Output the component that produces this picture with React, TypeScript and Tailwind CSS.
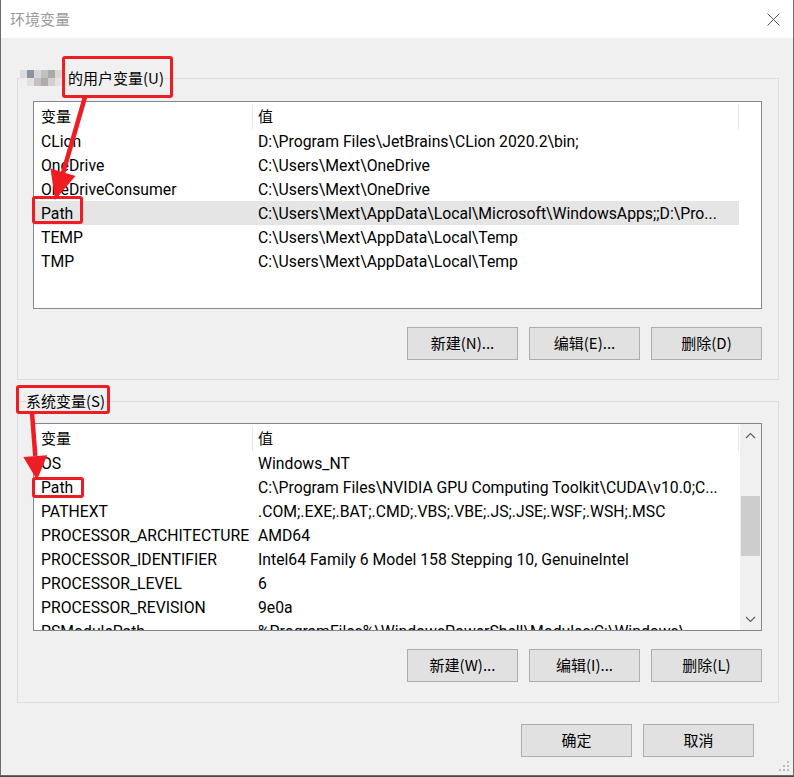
import React from "react";

const userRows: [string, string][] = [
  ["CLion", "D:\\Program Files\\JetBrains\\CLion 2020.2\\bin;"],
  ["OneDrive", "C:\\Users\\Mext\\OneDrive"],
  ["OneDriveConsumer", "C:\\Users\\Mext\\OneDrive"],
  ["Path", "C:\\Users\\Mext\\AppData\\Local\\Microsoft\\WindowsApps;;D:\\Pro..."],
  ["TEMP", "C:\\Users\\Mext\\AppData\\Local\\Temp"],
  ["TMP", "C:\\Users\\Mext\\AppData\\Local\\Temp"],
];

const sysRows: [string, string][] = [
  ["OS", "Windows_NT"],
  ["Path", "C:\\Program Files\\NVIDIA GPU Computing Toolkit\\CUDA\\v10.0;C..."],
  ["PATHEXT", ".COM;.EXE;.BAT;.CMD;.VBS;.VBE;.JS;.JSE;.WSF;.WSH;.MSC"],
  ["PROCESSOR_ARCHITECTURE", "AMD64"],
  ["PROCESSOR_IDENTIFIER", "Intel64 Family 6 Model 158 Stepping 10, GenuineIntel"],
  ["PROCESSOR_LEVEL", "6"],
  ["PROCESSOR_REVISION", "9e0a"],
  ["PSModulePath", "%ProgramFiles%\\WindowsPowerShell\\Modules;C:\\Windows\\..."],
];

const mosaic = [
  ["#dcdcdc", "#8a93a3", "#d6d6d6", "#c0c0c0", "#a9aaa3", "#d9d6d3"],
  ["#eeeeee", "#e0e0e0", "#c4bfc0", "#b3a9ab", "#d2d0cd", "#e5e3e1"],
];

function HeaderRow() {
  return (
    <div className="flex h-[27px] shrink-0">
      <div className="w-[218px] pl-[7px] pt-[4px] flex items-center">变量</div>
      <div className="w-px mt-[2px] bg-[#e5e5e5]" />
      <div className="w-[485px] pl-[5px] pt-[4px] flex items-center">值</div>
      <div className="w-px mt-[2px] bg-[#e5e5e5]" />
    </div>
  );
}

function Row({ name, value, selected }: { name: string; value: string; selected?: boolean }) {
  return (
    <div
      className={
        "flex h-[24px] w-[705px] shrink-0 items-center pt-[2px] text-[15.75px] " +
        (selected ? "bg-[#e5e5e5]" : "")
      }
    >
      <div className="w-[219px] pl-[7px] whitespace-nowrap overflow-hidden">{name}</div>
      <div className="w-[486px] pl-[5px] whitespace-nowrap overflow-hidden text-ellipsis">{value}</div>
    </div>
  );
}

function Btn({ label }: { label: string }) {
  return (
    <button className="w-[111px] h-[33px] bg-[#e1e1e1] border border-[#adadad] flex items-center justify-center text-[15px] text-black">
      {label}
    </button>
  );
}

function Chevron({ up }: { up?: boolean }) {
  return (
    <svg width="11" height="7" viewBox="0 0 11 7">
      <path
        d={up ? "M1 6 L5.5 1.5 L10 6" : "M1 1 L5.5 5.5 L10 1"}
        fill="none"
        stroke="#606060"
        strokeWidth="1.2"
      />
    </svg>
  );
}

export default function App() {
  const red = "#ee1d23";
  return (
    <div className="w-[794px] h-[777px] bg-[#4a4a4a] font-['Roboto','Noto_Sans_CJK_SC',sans-serif] text-[15px] text-black">
      <div className="relative w-[794px] h-[776px] bg-[#f0f0f0] border-x border-b border-[#6b6b6b] overflow-hidden">
        {/* Title bar */}
        <div className="h-[38px] bg-white flex items-center justify-between pl-[9px] pr-[13px]">
          <span className="text-[15px] text-[#9a9a9a] font-['Noto_Sans_CJK_SC',sans-serif]">环境变量</span>
          <svg width="13" height="13" viewBox="0 0 13 13">
            <path d="M0.5 0.5 L12.5 12.5 M12.5 0.5 L0.5 12.5" stroke="#555" strokeWidth="1" />
          </svg>
        </div>

        <div className="pl-[16px] pr-[14px]">
          {/* User variables */}
          <fieldset className="mt-[30px] border border-[#dcdcdc] w-[762px]">
            <legend className="ml-[2px] h-[20px] flex items-center leading-[20px]">
              <span className="flex flex-col">
                {mosaic.map((r, i) => (
                  <span key={i} className="flex">
                    {r.map((c, j) => (
                      <span key={j} className="w-[7px] h-[8px] block" style={{ background: c }} />
                    ))}
                  </span>
                ))}
              </span>
              <span className="ml-[6px] font-['Noto_Sans_CJK_SC',sans-serif]">的用户变量(U)</span>
            </legend>
            <div className="pl-[15px] pr-[16px] pt-[13px] pb-[19px]">
              <div className="h-[208px] bg-white border border-[#828790] flex flex-col overflow-hidden">
                <HeaderRow />
                {userRows.map(([n, v]) => (
                  <Row key={n} name={n} value={v} selected={n === "Path"} />
                ))}
              </div>
              <div className="mt-[18px] flex justify-end gap-[11px] font-['Noto_Sans_CJK_SC',sans-serif]">
                <Btn label="新建(N)..." />
                <Btn label="编辑(E)..." />
                <Btn label="删除(D)" />
              </div>
            </div>
          </fieldset>

          {/* System variables */}
          <fieldset className="mt-[11px] border border-[#dcdcdc] w-[762px]">
            <legend className="ml-[8px] h-[20px] leading-[20px] font-['Noto_Sans_CJK_SC',sans-serif]">系统变量(S)</legend>
            <div className="pl-[15px] pr-[16px] pt-[12px] pb-[20px]">
              <div className="h-[208px] bg-white border border-[#828790] flex overflow-hidden">
                <div className="flex-1 flex flex-col overflow-hidden">
                  <HeaderRow />
                  {sysRows.map(([n, v]) => (
                    <Row key={n} name={n} value={v} />
                  ))}
                </div>
                <div className="w-[21px] bg-[#f0f0f0] flex flex-col">
                  <div className="h-[22px] flex items-center justify-center">
                    <Chevron up />
                  </div>
                  <div className="flex-1 px-[1px]">
                    <div className="mt-[50px] h-[60px] bg-[#cdcdcd]" />
                  </div>
                  <div className="h-[22px] flex items-center justify-center">
                    <Chevron />
                  </div>
                </div>
              </div>
              <div className="mt-[18px] flex justify-end gap-[11px] font-['Noto_Sans_CJK_SC',sans-serif]">
                <Btn label="新建(W)..." />
                <Btn label="编辑(I)..." />
                <Btn label="删除(L)" />
              </div>
            </div>
          </fieldset>

          <div className="mt-[21px] w-[762px] pr-[25px] flex justify-end gap-[11px] font-['Noto_Sans_CJK_SC',sans-serif]">
            <Btn label="确定" />
            <Btn label="取消" />
          </div>
        </div>

        {/* Resize grip */}
        <svg className="absolute right-[3px] bottom-[3px]" width="11" height="11" viewBox="0 0 11 11">
          <rect x="8" y="0" width="2" height="2" fill="#bdbdbd" />
          <rect x="4" y="4" width="2" height="2" fill="#bdbdbd" />
          <rect x="8" y="4" width="2" height="2" fill="#bdbdbd" />
          <rect x="0" y="8" width="2" height="2" fill="#bdbdbd" />
          <rect x="4" y="8" width="2" height="2" fill="#bdbdbd" />
          <rect x="8" y="8" width="2" height="2" fill="#bdbdbd" />
        </svg>
      </div>

      {/* Red annotations overlay */}
      <svg className="absolute left-0 top-0 pointer-events-none" width="794" height="777" viewBox="0 0 794 777">
        <g fill="none" stroke={red} strokeWidth="3">
          <rect x="63.5" y="57.5" width="108" height="39" rx="1.5" />
          <rect x="33.5" y="197.5" width="48" height="25" rx="1.5" />
          <rect x="17.5" y="386.5" width="91" height="26" rx="1.5" />
          <rect x="33.5" y="478.5" width="49" height="18" rx="1.5" />
        </g>
        <line x1="85" y1="97" x2="63" y2="173" stroke={red} strokeWidth="4.5" />
        <polygon points="55,200 75.5,176 50.5,168.6" fill={red} />
        <line x1="32" y1="413" x2="35.3" y2="456" stroke={red} strokeWidth="4.5" />
        <polygon points="37,480 47.2,455.2 23.3,457" fill={red} />
      </svg>
    </div>
  );
}
